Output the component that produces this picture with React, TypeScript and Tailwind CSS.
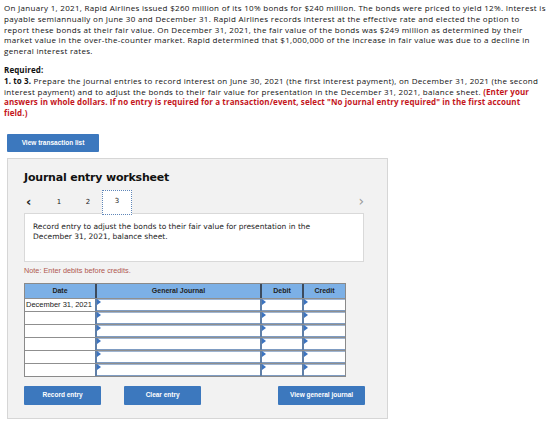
const rows = [0, 1, 2, 3, 4, 5];

const Marker = () => (
  <span className="absolute left-0 top-0 w-0 h-0 border-t-[3px] border-b-[3px] border-l-[4px] border-t-transparent border-b-transparent border-l-[#3b73c0]" />
);

const InputCell = ({ w }: { w: string }) => (
  <div className={`relative ${w} h-[12px] border-l-2 border-[#5f7fa8] bg-white`}>
    <div className="absolute inset-x-0 top-0 h-px bg-[#9fb5d2]" />
    <div className="absolute inset-x-0 bottom-0 h-px bg-[#7f9cc2]" />
    <Marker />
  </div>
);

export default function App() {
  return (
    <div className="w-[560px] h-[446px] bg-white text-[#222] overflow-hidden">
      <div className="pl-[4px] pt-[3px] text-[8px] leading-[10.8px] font-['Open_Sans',sans-serif] tracking-[0.3px] text-[#111]">
        <p>
          On January 1, 2021, Rapid Airlines issued $260 million of its 10% bonds for $240 million. The bonds were priced to yield 12%. Interest is
          <br />
          payable semiannually on June 30 and December 31. Rapid Airlines records interest at the effective rate and elected the option to
          <br />
          report these bonds at their fair value. On December 31, 2021, the fair value of the bonds was $249 million as determined by their
          <br />
          market value in the over-the-counter market. Rapid determined that $1,000,000 of the increase in fair value was due to a decline in
          <br />
          general interest rates.
        </p>
        <p className="mt-[8px] font-bold tracking-[0.1px]">Required:</p>
        <p>
          <b className="tracking-[0.1px]">1. to 3.</b> Prepare the journal entries to record interest on June 30, 2021 (the first interest payment), on December 31, 2021 (the second
          <br />
          interest payment) and to adjust the bonds to their fair value for presentation in the December 31, 2021, balance sheet.{' '}
          <b className="text-[#c4161c] tracking-[0.1px]">(Enter your</b>
          <br />
          <b className="text-[#c4161c] tracking-[0.1px]">
            answers in whole dollars. If no entry is required for a transaction/event, select "No journal entry required" in the first account
            <br />
            field.)
          </b>
        </p>
      </div>

      <div className="ml-[7px] mt-[8px]">
        <button className="w-[92px] h-[18px] bg-[#3c78be] rounded-[1px] text-white text-[6.5px] font-bold font-['Liberation_Sans',sans-serif]">
          View transaction list
        </button>

        <div className="mt-[6px] w-[381px] h-[261px] bg-[#f2f2f2] border border-[#d6d6d6] pl-[16px] pr-[22px]">
          <h2 className="mt-[12px] text-[11px] leading-[14px] font-bold font-['DejaVu_Sans',sans-serif] text-[#111] tracking-[-0.2px]">
            Journal entry worksheet
          </h2>

          <div className="mt-[5px] flex items-center h-[25px] font-['DejaVu_Sans',sans-serif] text-[7px] text-[#222]">
            <span className="w-[20px] pl-[2px] text-[13px] leading-none font-bold -mt-[2px]">‹</span>
            <span className="w-[30px] text-center">1</span>
            <span className="w-[28px] text-center">2</span>
            <span className="w-[30px] h-[25px] bg-white border border-dotted border-[#5f86b8] text-center pt-[5px] relative z-10">
              3
            </span>
            <span className="ml-auto pr-[1px] text-[14px] leading-none text-[#999] -mt-[2px]">›</span>
          </div>

          <div className="-mt-[2px] w-[340px] h-[49px] bg-white border border-[#d9d9d9] px-[8px] pt-[8px] text-[7.5px] leading-[10px] font-['DejaVu_Sans',sans-serif] text-[#222]">
            Record entry to adjust the bonds to their fair value for presentation in the
            <br />
            December 31, 2021, balance sheet.
          </div>

          <p className="mt-[5px] text-[7.3px] leading-[8px] text-[#b0584f] font-['Liberation_Sans',sans-serif]">
            Note: Enter debits before credits.
          </p>

          <div className="mt-[8px] w-[322px] border border-[#8a8a8a] font-['Liberation_Sans',sans-serif] text-[7.5px] text-[#222]">
            <div className="flex h-[14px] bg-[#7cb0e6] font-bold text-[7px] leading-[14px]">
              <div className="w-[70px] text-center">Date</div>
              <div className="w-[165px] text-center border-l-2 border-[#3c4a5c]">General Journal</div>
              <div className="w-[42px] text-center border-l-2 border-[#3c4a5c]">Debit</div>
              <div className="flex-1 text-center border-l-2 border-[#3c4a5c]">Credit</div>
            </div>
            {rows.map((r) => (
              <div key={r} className="flex border-t border-[#8f8f8f]">
                <div className="w-[70px] h-[12px] bg-white leading-[12px] pl-[1px] whitespace-nowrap">
                  {r === 0 ? 'December 31, 2021' : ''}
                </div>
                <InputCell w="w-[165px]" />
                <InputCell w="w-[42px]" />
                <InputCell w="flex-1" />
              </div>
            ))}
          </div>

          <div className="mt-[9px] flex font-['Liberation_Sans',sans-serif] text-[6.5px] font-bold text-white">
            <button className="w-[79px] h-[19px] bg-[#3c78be] rounded-[1px]">Record entry</button>
            <button className="ml-[23px] w-[79px] h-[19px] bg-[#3c78be] rounded-[1px]">Clear entry</button>
            <button className="ml-[77px] w-[89px] h-[19px] bg-[#3c78be] rounded-[1px]">View general journal</button>
          </div>
        </div>
      </div>
    </div>
  );
}
